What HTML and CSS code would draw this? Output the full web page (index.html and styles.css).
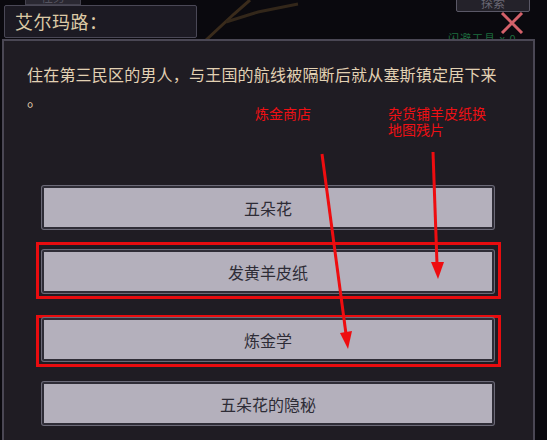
FILE: index.html
```html
<!DOCTYPE html>
<html lang="zh-CN">
<head>
<meta charset="utf-8">
<title>艾尔玛路</title>
<link rel="stylesheet" href="styles.css">
</head>
<body>
<div class="scene">
  <header class="topbar">
    <div class="tab">任务</div>
    <svg class="branch" width="120" height="40" viewBox="0 0 120 40">
      <path d="M8 40 L36 14 L52 0" stroke="#3a2b1b" stroke-width="3" fill="none"/>
      <path d="M28 22 L60 12 L100 4" stroke="#33271a" stroke-width="3" fill="none"/>
    </svg>
    <div class="name-box">艾尔玛路：</div>
    <div class="top-btn">探索</div>
    <svg class="close" width="24" height="22" viewBox="0 0 24 22">
      <path d="M2 1 L22 21 M22 1 L2 21" stroke="#d4616a" stroke-width="3"/>
    </svg>
    <div class="item-tip">闪避工具 x 0</div>
  </header>
  <section class="dialog">
    <p class="desc">住在第三民区的男人，与王国的航线被隔断后就从塞斯镇定居下来。</p>
    <div class="options">
      <div class="slot"><button class="opt">五朵花</button></div>
      <div class="slot hl">
        <button class="opt">发黄羊皮纸</button>
      </div>
      <div class="slot hl hl-b"><button class="opt">炼金学</button></div>
      <div class="slot"><button class="opt">五朵花的隐秘</button></div>
    </div>
  </section>
  <div class="note note-a">炼金商店</div>
  <div class="note note-b">杂货铺羊皮纸换<br>地图残片</div>
  <svg class="arrows" width="547" height="440" viewBox="0 0 547 440">
    <line x1="322" y1="154" x2="346" y2="334" stroke="#ee0d10" stroke-width="3"/>
    <polygon points="348,349 352,331 340,333" fill="#ee0d10"/>
    <line x1="433" y1="152" x2="437" y2="264" stroke="#ee0d10" stroke-width="3"/>
    <polygon points="438,279 444,262 431,262" fill="#ee0d10"/>
  </svg>
</div>
</body>
</html>
```

FILE: styles.css
```css
* { box-sizing: border-box; }
html, body {
  margin: 0;
  padding: 0;
  background: #0a090e;
}
.scene {
  position: relative;
  width: 547px;
  height: 440px;
  overflow: hidden;
  background: #0a090e;
  font-family: "Noto Sans CJK SC", "Noto Sans", sans-serif;
}
.topbar {
  position: relative;
  height: 39px;
  display: flex;
  align-items: flex-start;
  padding: 5px 0 0 4px;
}
.tab {
  position: absolute;
  left: 25px;
  top: -12px;
  width: 56px;
  height: 17px;
  background: #2a2832;
  border: 1px solid #44424e;
  color: #55535f;
  font-size: 12px;
  line-height: 15px;
  text-align: center;
}
.branch {
  position: absolute;
  left: 198px;
  top: 0;
}
.name-box {
  position: relative;
  width: 193px;
  height: 33px;
  background: #1c1a23;
  border: 1px solid #4a4856;
  border-radius: 2px;
  color: #dccaa6;
  font-size: 18px;
  line-height: 31px;
  padding-left: 10px;
  letter-spacing: 0.5px;
}
.top-btn {
  position: absolute;
  left: 456px;
  top: -6px;
  width: 74px;
  height: 18px;
  background: #24222a;
  border: 1px solid #5a5866;
  border-radius: 2px;
  color: #6a6874;
  font-size: 12px;
  line-height: 16px;
  text-align: center;
}
.close {
  position: absolute;
  left: 500px;
  top: 12px;
}
.item-tip {
  position: absolute;
  left: 448px;
  top: 30px;
  color: #1d6e3e;
  font-size: 11px;
  letter-spacing: 1px;
}
.dialog {
  position: relative;
  margin-left: 2px;
  width: 533px;
  height: 410px;
  background: #1f1c23;
  border: 2px solid #4a4754;
  border-bottom: none;
  padding-top: 21px;
}
.desc {
  margin: 0 0 0 23px;
  width: 478px;
  color: #e2d1b3;
  font-size: 16px;
  line-height: 25px;
  letter-spacing: 0.2px;
  line-break: anywhere;
}
.options {
  margin: 66px 0 0 32px;
  width: 465px;
  display: flex;
  flex-direction: column;
  gap: 7px;
}
.slot {
  border: 3px solid transparent;
  padding: 5px 4px 3px 3px;
}
.slot.hl { border-color: #e80c0f; }
.slot.hl-b {
  margin-top: 9px;
  padding: 0 4px 3px 3px;
}
.opt {
  display: block;
  width: 100%;
  height: 43px;
  margin: 0;
  background: #b4b0bc;
  border: 2px solid #2f2d37;
  border-radius: 2px;
  box-shadow: 0 0 0 1px #6c6a78;
  color: #2e2c36;
  font-family: "Noto Sans CJK SC", "Noto Sans", sans-serif;
  font-size: 16px;
  text-align: center;
  padding: 0;
}
.note {
  position: absolute;
  color: #ee1014;
  font-size: 14px;
  line-height: 16px;
}
.note-a { left: 255px; top: 105px; }
.note-b { left: 388px; top: 105px; }
.arrows {
  position: absolute;
  left: 0;
  top: 0;
  pointer-events: none;
}
```
